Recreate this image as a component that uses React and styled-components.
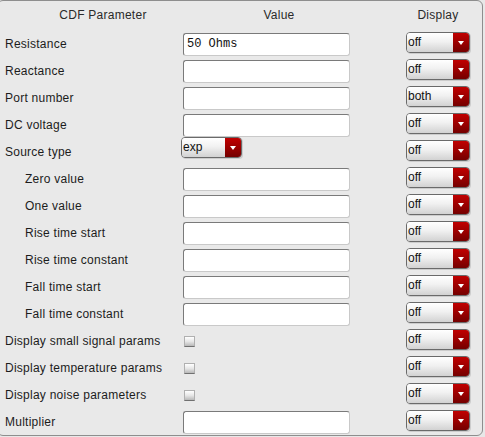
import React from "react";
import styled, { createGlobalStyle } from "styled-components";

const Global = createGlobalStyle`
  html, body { margin: 0; padding: 0; background: #e8e8e8; overflow: hidden; }
  body { font-family: "Liberation Sans", Arial, sans-serif; }
`;

const Panel = styled.div`
  box-sizing: border-box;
  margin-left: -3px;
  width: 486px;
  height: 436px;
  border: 1px solid #8e8e8e;
  border-radius: 6px;
  background: #e9e9e9;
  padding-left: 7px;
  color: #1c1c1c;
  font-size: 12px;
  letter-spacing: 0.25px;
`;

const Header = styled.div`
  display: grid;
  grid-template-columns: 210px 142px 1fr;
  height: 29px;
  margin-left: -7px;
  align-items: center;
  color: #2a2a2a;
`;

const HeadCell = styled.div`
  text-align: center;
  padding-left: ${(p) => p.$pad || 0}px;
  padding-bottom: 1px;
`;

const Row = styled.div`
  display: grid;
  grid-template-columns: 178px 223px 64px;
  height: 27px;
  align-items: start;
`;

const Label = styled.div`
  line-height: 28px;
  padding-left: ${(p) => (p.$indent ? 20 : 0)}px;
  white-space: nowrap;
`;

const TextInput = styled.div`
  box-sizing: border-box;
  margin-top: 3px;
  width: 167px;
  height: 23px;
  background: #fff;
  border: 1px solid #c9c9c9;
  border-top-color: #7a7a7a;
  border-left-color: #7a7a7a;
  border-radius: 3px;
  font-family: "Liberation Mono", "Courier New", monospace;
  font-size: 12px;
  letter-spacing: 0;
  line-height: 21px;
  padding-left: 3px;
  color: #111;
`;

const Select = styled.div`
  box-sizing: border-box;
  display: flex;
  margin-top: ${(p) => p.$top}px;
  margin-left: ${(p) => p.$left || 0}px;
  width: ${(p) => p.$w}px;
  height: 21px;
  border: 1px solid #6a6a6a;
  border-radius: 4px;
  overflow: hidden;
  box-shadow: 1px 1px 0 rgba(0, 0, 0, 0.12);
`;

const SelectText = styled.div`
  flex: 1;
  background: linear-gradient(#ffffff 0%, #f1f1f1 45%, #d2d2d2 100%);
  line-height: 19px;
  padding-left: 1px;
  color: #111;
  font-size: 12px;
  letter-spacing: 0;
`;

const SelectArrow = styled.div`
  width: 16px;
  display: flex;
  align-items: center;
  justify-content: center;
  background: linear-gradient(#c00000 0%, #9c0000 50%, #740000 100%);
  &::after {
    content: "";
    width: 0;
    height: 0;
    border-left: 3.5px solid transparent;
    border-right: 3.5px solid transparent;
    border-top: 4px solid #fff;
    margin-top: 1px;
  }
`;

const Check = styled.div`
  box-sizing: border-box;
  margin-top: 9px;
  margin-left: 1px;
  width: 11px;
  height: 11px;
  border: 1px solid #b0b0b0;
  border-bottom-color: #707070;
  background: linear-gradient(#ffffff 0%, #e6e6e6 50%, #b8b8b8 100%);
`;

const rows = [
  { label: "Resistance", kind: "input", value: "50 Ohms", display: "off" },
  { label: "Reactance", kind: "input", display: "off" },
  { label: "Port number", kind: "input", display: "both" },
  { label: "DC voltage", kind: "input", display: "off" },
  { label: "Source type", kind: "select", value: "exp", display: "off" },
  { label: "Zero value", indent: true, kind: "input", display: "off" },
  { label: "One value", indent: true, kind: "input", display: "off" },
  { label: "Rise time start", indent: true, kind: "input", display: "off" },
  { label: "Rise time constant", indent: true, kind: "input", display: "off" },
  { label: "Fall time start", indent: true, kind: "input", display: "off" },
  { label: "Fall time constant", indent: true, kind: "input", display: "off" },
  { label: "Display small signal params", kind: "check", display: "off" },
  { label: "Display temperature params", kind: "check", display: "off" },
  { label: "Display noise parameters", kind: "check", display: "off" },
  { label: "Multiplier", kind: "input", display: "off" },
];

function Dropdown({ text, w, top, left }) {
  return (
    <Select $w={w} $top={top} $left={left}>
      <SelectText>{text}</SelectText>
      <SelectArrow />
    </Select>
  );
}

export default function App() {
  return (
    <>
      <Global />
      <Panel>
        <Header>
          <HeadCell>CDF Parameter</HeadCell>
          <HeadCell>Value</HeadCell>
          <HeadCell $pad={44}>Display</HeadCell>
        </Header>
        {rows.map((r) => (
          <Row key={r.label}>
            <Label $indent={r.indent}>{r.label}</Label>
            <div>
              {r.kind === "input" && <TextInput>{r.value || ""}</TextInput>}
              {r.kind === "select" && (
                <Dropdown text={r.value} w={61} top={-1} left={-2} />
              )}
              {r.kind === "check" && <Check />}
            </div>
            <Dropdown text={r.display} w={64} top={2} />
          </Row>
        ))}
      </Panel>
    </>
  );
}
